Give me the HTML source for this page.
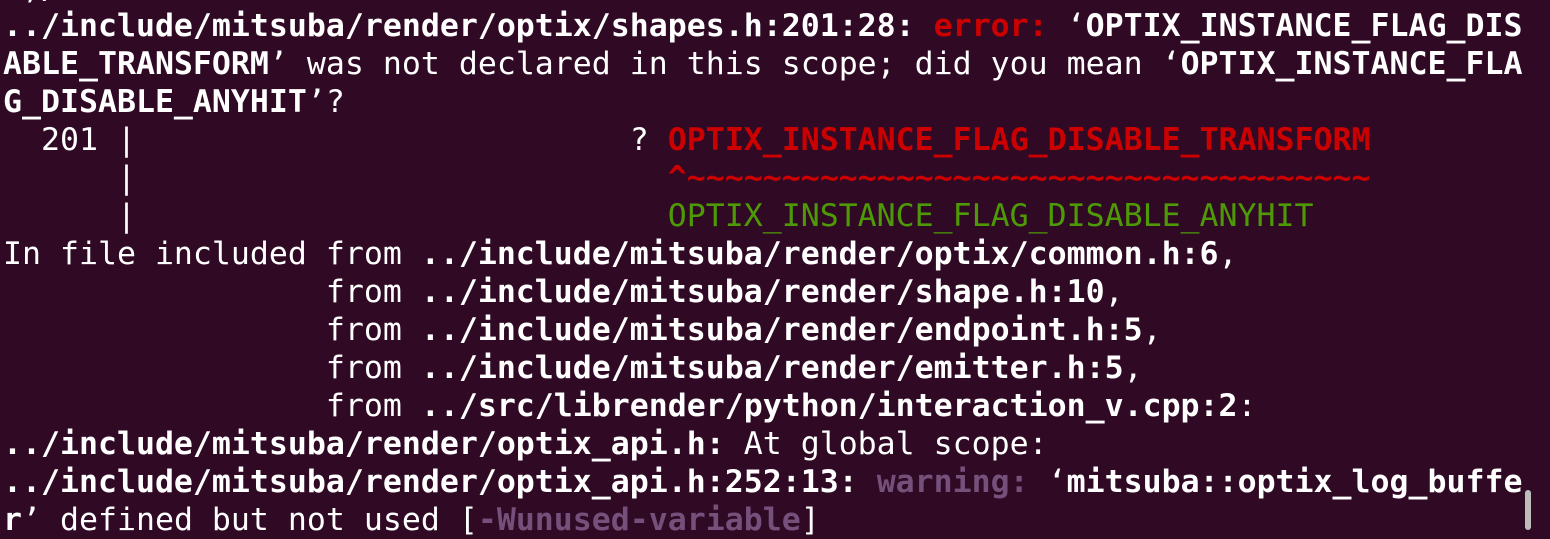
<!DOCTYPE html>
<html><head><meta charset="utf-8"><style>
html,body{margin:0;padding:0;background:#300a24;width:1550px;height:523px;overflow:hidden}
pre{position:absolute;left:3px;top:-31px;margin:0;font-family:"DejaVu Sans Mono","Liberation Mono",monospace;font-size:31.55px;line-height:38px;color:#ffffff;white-space:pre}
b{font-weight:bold}
.r{color:#cc0000;font-weight:bold}
.g{color:#4e9a06}
.w{color:#75507b;font-weight:bold}
.sb{position:absolute;left:1525px;top:490px;width:6px;height:40px;background:#bdbdbd;border-radius:3px}
</style></head><body>
<pre> ,/
<b>../include/mitsuba/render/optix/shapes.h:201:28:</b> <span class="r">error:</span> ‘<b>OPTIX_INSTANCE_FLAG_DIS
ABLE_TRANSFORM</b>’ was not declared in this scope; did you mean ‘<b>OPTIX_INSTANCE_FLA
G_DISABLE_ANYHIT</b>’?
  201 |                          ? <span class="r">OPTIX_INSTANCE_FLAG_DISABLE_TRANSFORM</span>
      |                            <span class="r">^~~~~~~~~~~~~~~~~~~~~~~~~~~~~~~~~~~~~</span>
      |                            <span class="g">OPTIX_INSTANCE_FLAG_DISABLE_ANYHIT</span>
In file included from <b>../include/mitsuba/render/optix/common.h:6</b>,
                 from <b>../include/mitsuba/render/shape.h:10</b>,
                 from <b>../include/mitsuba/render/endpoint.h:5</b>,
                 from <b>../include/mitsuba/render/emitter.h:5</b>,
                 from <b>../src/librender/python/interaction_v.cpp:2</b>:
<b>../include/mitsuba/render/optix_api.h:</b> At global scope:
<b>../include/mitsuba/render/optix_api.h:252:13:</b> <span class="w">warning:</span> ‘<b>mitsuba::optix_log_buffe
r</b>’ defined but not used [<span class="w">-Wunused-variable</span>]</pre>
<div class="sb"></div>
</body></html>
